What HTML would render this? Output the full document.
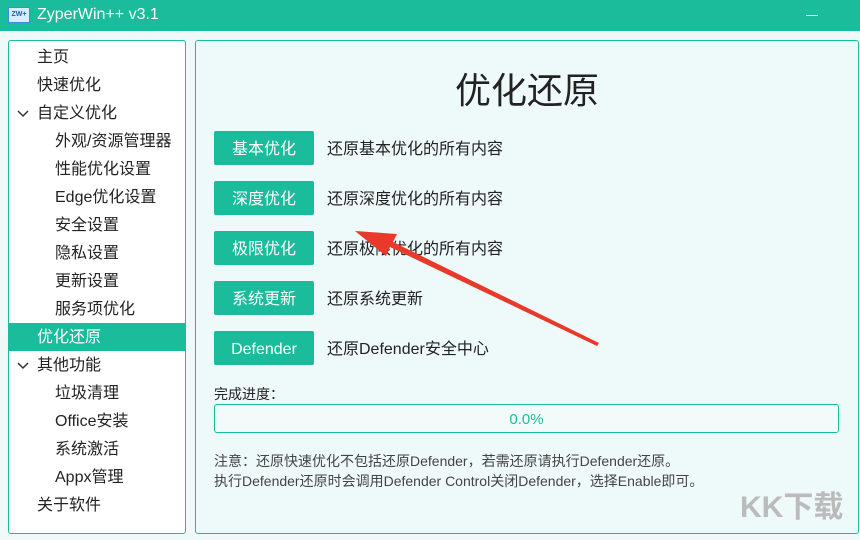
<!DOCTYPE html>
<html><head><meta charset="utf-8"><style>
body{margin:0;width:860px;height:540px;background:#eff9f8;font-family:"Liberation Sans","Noto Sans CJK SC",sans-serif;position:relative;overflow:hidden;color:#222}
.tb{position:absolute;left:0;top:0;width:860px;height:31px;background:#1abc9c;color:#fff;font-size:16px}
.tb .t{position:absolute;left:37px;top:6px}
.ico{position:absolute;left:8px;top:7px;width:20px;height:14px;background:#d8ecff;border:1px solid #3a8de0;font-size:7px;color:#1a5fb0;font-weight:bold;text-align:center;line-height:14px}
.min{position:absolute;left:806px;top:15px;width:12px;height:1px;background:#fff}
.lp{position:absolute;left:8px;top:40px;width:176px;height:492px;background:#fff;border:1px solid #1abc9c;border-radius:3px}
.it{position:absolute;left:0;width:176px;height:28px;line-height:30px;font-size:16px}
.sel{background:#1abc9c;color:#fff}
.rp{position:absolute;left:195px;top:40px;width:662px;height:492px;border:1px solid #1abc9c;border-radius:3px;background:#eefaf9}
h1{position:absolute;top:62px;margin:0;text-align:center;font-weight:normal;font-size:36px;color:#222}
.btn{position:absolute;left:214px;width:100px;height:34px;background:#1abc9c;color:#fff;font-size:16px;line-height:37px;text-align:center;border-radius:2px}
.lb{position:absolute;left:327px;font-size:16px;line-height:37px}
.pb{position:absolute;left:214px;top:404px;width:623px;height:27px;border:1px solid #1abc9c;border-radius:3px;background:#f2fbfa;text-align:center;line-height:29px;color:#1abc9c;font-size:15px}
.n{position:absolute;left:214px;font-size:14px;color:#444}
.ch{position:absolute;left:8px;top:11px}
</style></head><body>
<div class="tb"><div class="ico">ZW+</div><div class="t">ZyperWin++ v3.1</div><div class="min"></div></div>
<div class="lp">
<div class="it" style="top:2px;padding-left:28px;width:148px">主页</div>
<div class="it" style="top:30px;padding-left:28px;width:148px">快速优化</div>
<div class="it" style="top:58px;padding-left:28px;width:148px"><svg class="ch" width="12" height="8"><path d="M1 1 L6 6 L11 1" stroke="#333" stroke-width="1.5" fill="none"/></svg>自定义优化</div>
<div class="it" style="top:86px;padding-left:46px;width:130px">外观/资源管理器</div>
<div class="it" style="top:114px;padding-left:46px;width:130px">性能优化设置</div>
<div class="it" style="top:142px;padding-left:46px;width:130px">Edge优化设置</div>
<div class="it" style="top:170px;padding-left:46px;width:130px">安全设置</div>
<div class="it" style="top:198px;padding-left:46px;width:130px">隐私设置</div>
<div class="it" style="top:226px;padding-left:46px;width:130px">更新设置</div>
<div class="it" style="top:254px;padding-left:46px;width:130px">服务项优化</div>
<div class="it sel" style="top:282px;padding-left:28px;width:148px">优化还原</div>
<div class="it" style="top:310px;padding-left:28px;width:148px"><svg class="ch" width="12" height="8"><path d="M1 1 L6 6 L11 1" stroke="#333" stroke-width="1.5" fill="none"/></svg>其他功能</div>
<div class="it" style="top:338px;padding-left:46px;width:130px">垃圾清理</div>
<div class="it" style="top:366px;padding-left:46px;width:130px">Office安装</div>
<div class="it" style="top:394px;padding-left:46px;width:130px">系统激活</div>
<div class="it" style="top:422px;padding-left:46px;width:130px">Appx管理</div>
<div class="it" style="top:450px;padding-left:28px;width:148px">关于软件</div>
</div>
<div class="rp"></div>
<h1 style="left:195px;width:664px">优化还原</h1>
<div class="btn" style="top:131px">基本优化</div><div class="lb" style="top:131px">还原基本优化的所有内容</div>
<div class="btn" style="top:181px">深度优化</div><div class="lb" style="top:181px">还原深度优化的所有内容</div>
<div class="btn" style="top:231px">极限优化</div><div class="lb" style="top:231px">还原极限优化的所有内容</div>
<div class="btn" style="top:281px">系统更新</div><div class="lb" style="top:281px">还原系统更新</div>
<div class="btn" style="top:331px">Defender</div><div class="lb" style="top:331px">还原Defender安全中心</div>
<div class="n" style="top:384px;color:#222">完成进度：</div>
<div class="pb">0.0%</div>
<div class="n" style="top:451px">注意：还原快速优化不包括还原Defender，若需还原请执行Defender还原。</div>
<div class="n" style="top:471px">执行Defender还原时会调用Defender Control关闭Defender，选择Enable即可。</div>
<svg style="position:absolute;left:0;top:0" width="860" height="540"><polygon points="597,346 390,247 386,256 355,231 397,234 393,242 599,343" fill="#e8392b"/></svg>
<div style="position:absolute;left:740px;top:482px;font-size:30px;color:#bbb;font-weight:bold">KK下载</div>
</body></html>
